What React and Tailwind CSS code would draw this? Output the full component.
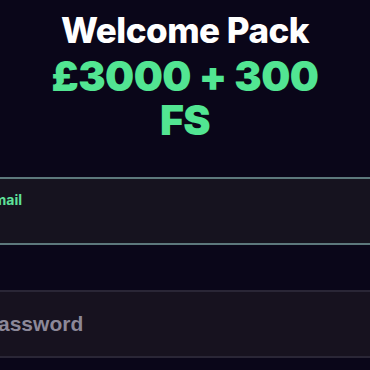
import React from "react";

const App = () => {
  return (
    <div
      className="w-[370px] h-[370px] overflow-hidden bg-[#0a0619]"
      style={{ fontFamily: "Inter, 'Liberation Sans', sans-serif" }}
    >
      {/* Heading */}
      <div className="pt-[9px] text-center">
        <h1 className="text-[35px] leading-[42px] font-extrabold text-white tracking-[-0.5px]">
          Welcome Pack
        </h1>
        <p className="mt-[3px] text-[41px] leading-[44px] font-black text-[#52e592] tracking-[-0.5px]">
          £3000 + 300
          <br />
          FS
        </p>
      </div>

      {/* Form fields */}
      <div className="mt-[35px] ml-[-30px] w-[430px]">
        <div className="h-[68px] rounded-md border-2 border-[#5d787c] bg-[#16131f] px-[13px] pt-[11px]">
          <label className="block text-[14px] leading-[20px] font-bold text-[#5ee29a]">
            Email
          </label>
        </div>
        <div className="mt-[45px] h-[68px] rounded-md border-2 border-[#2a2636] bg-[#17121f] flex items-center pl-[12px]">
          <span
            className="text-[21px] font-bold text-[#8c8898]"
            style={{ fontFamily: "'Liberation Sans', Arial, sans-serif" }}
          >
            Password
          </span>
        </div>
      </div>
    </div>
  );
};

export default App;
